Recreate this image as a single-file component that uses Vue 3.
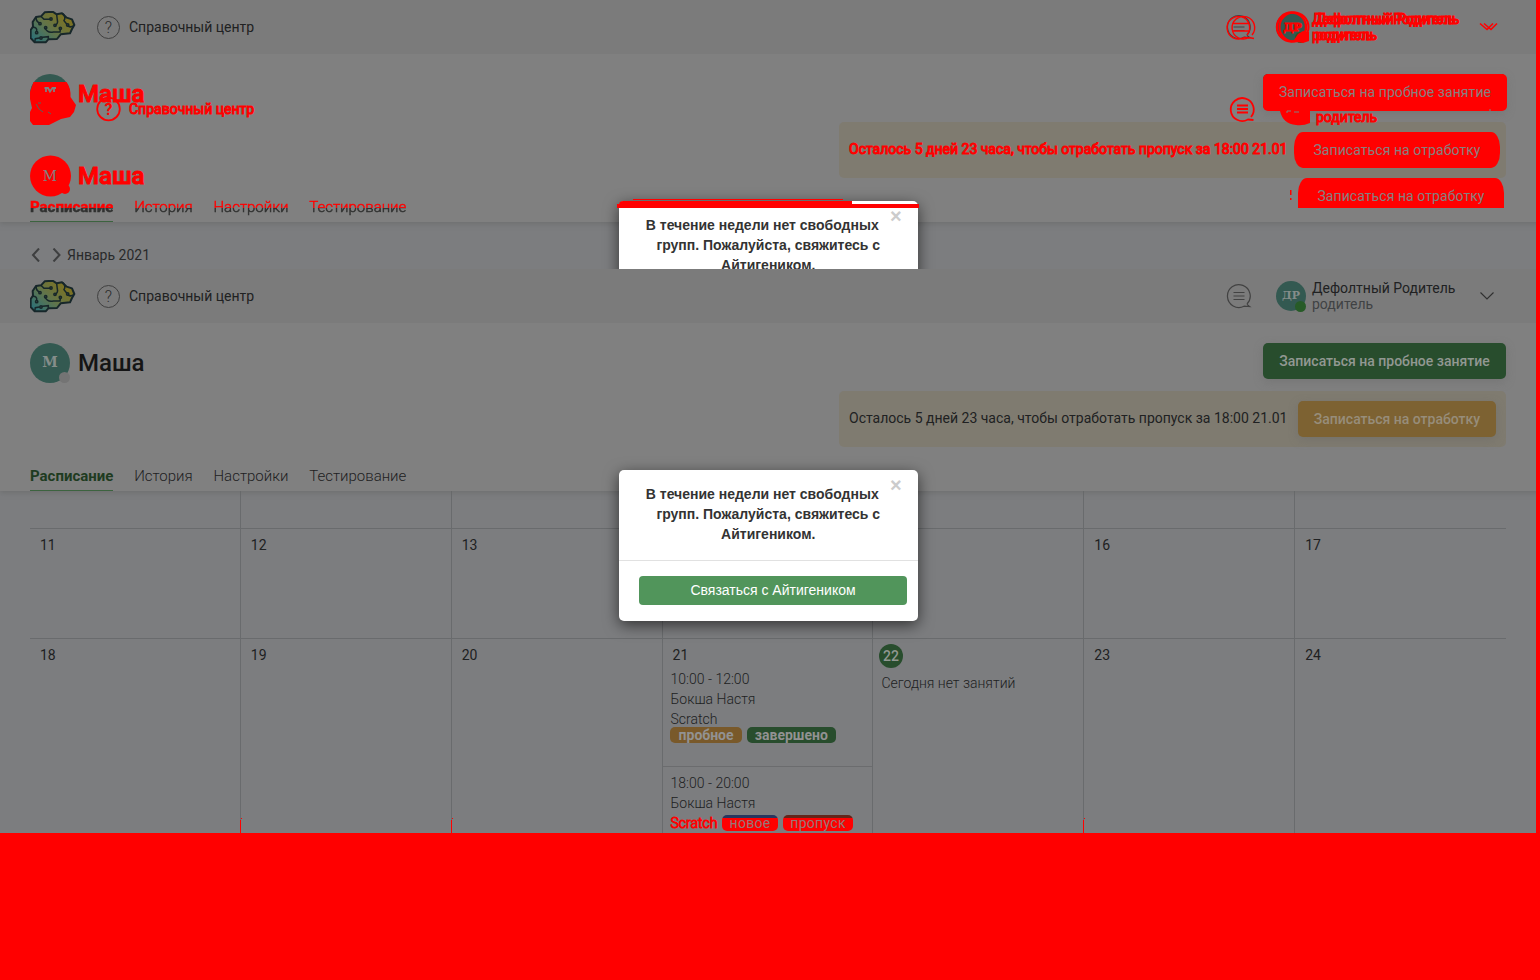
<script setup>
const tabs = [
  { name: 'Расписание', active: true },
  { name: 'История' },
  { name: 'Настройки' },
  { name: 'Тестирование' }
]
const weekA = [11, 12, 13, 14, 15, 16, 17]
const weekB = [18, 19, 20, 21, 22, 23, 24]
const frames = [{ id: 'first', diff: true }, { id: 'second', diff: false }]
const brainOutline = 'M99 80 L98 66 L108 51 L123 49 L134 37 L158 35 L170 43 L186 40 L200 53 L216 58 L223 75 L216 87 L210 100 L182 103 L171 117 L145 118 L137 127 L104 127 L92 114 L92 90 Z'
</script>

<template>
  <div class="screen">
    <section v-for="f in frames" :key="f.id" class="frame" :class="f.id">
      <header class="topbar">
        <svg class="brain" viewBox="90 33 138 99">
          <defs>
            <linearGradient :id="'g-' + f.id" x1="0" y1="1" x2="1" y2="0.2">
              <stop offset="0" stop-color="#237080" />
              <stop offset=".5" stop-color="#637448" />
              <stop offset="1" stop-color="#847116" />
            </linearGradient>
          </defs>
          <path :d="brainOutline" :fill="`url(#g-${f.id})`" stroke="#17272a" stroke-width="6" stroke-linejoin="round" />
          <g fill="none" stroke="#17272a" stroke-width="4.500" stroke-linecap="round">
            <path d="M108 52 Q108 64 116 68 M124 50 L132 58 L150 58 M170 44 L172 60 Q175 71 166 75 M135 84 Q142 100 160 96 L180 96 L181 88 M99 82 Q112 82 110 94 M145 118 L145 110 L128 112 M104 127 L106 116 L118 114 M222 76 Q214 84 204 78 M190 42 Q198 52 192 62 L200 72" />
            <circle cx="120" cy="71" r="3.500" /><circle cx="153" cy="57" r="3.500" /><circle cx="165" cy="76" r="3.500" />
            <circle cx="137" cy="83" r="3.500" /><circle cx="181" cy="85" r="3.500" /><circle cx="203" cy="75" r="3.500" />
            <circle cx="110" cy="98" r="3.500" /><circle cx="123" cy="114" r="3.500" />
          </g>
        </svg>
        <span class="help">?</span>
        <span class="help-label">Справочный центр</span>
        <div class="user">
          <svg class="chat" viewBox="0 0 26 26">
            <path d="M21 21 A11.4 11.4 0 1 0 18 23.2 L23.5 23.5 Q22 22.5 21 21 M7.500 9.500 H18.500 M7.500 13 H18.500 M7.500 16.500 H18.500" />
          </svg>
          <span class="avatar small"><b>ДР</b><i></i></span>
          <span class="who"><span>Дефолтный Родитель</span><span class="role">родитель</span></span>
          <svg class="chev" viewBox="0 0 14 8"><path d="M.5 .5 L7 7 L13.500 .5" /></svg>
        </div>
      </header>

      <div class="panel">
        <div class="student"><span class="avatar"><b>М</b><i></i></span><span class="name">Маша</span></div>
        <div class="actions">
          <button class="btn green"><span v-if="!f.diff">Записаться на пробное занятие</span></button>
          <div class="notice">
            <span v-if="!f.diff" class="notice-text">Осталось 5 дней 23 часа, чтобы отработать пропуск за 18:00 21.01</span>
            <button v-if="!f.diff" class="btn amber">Записаться на отработку</button>
          </div>
        </div>
        <nav><a v-for="t in tabs" :key="t.name" :class="{ active: t.active }">{{ t.name }}</a></nav>
      </div>

      <div v-if="f.diff" class="month">
        <svg viewBox="0 0 32 14"><path d="M9 .5 L3 7 L9 13.500 M23.500 .5 L29.500 7 L23.500 13.500" /></svg>
        <span>Январь 2021</span>
      </div>
      <div v-else class="calendar">
        <div class="week w0"><div v-for="n in 7" :key="n" class="day"></div></div>
        <div class="week w1"><div v-for="n in weekA" :key="n" class="day"><span class="num">{{ n }}</span></div></div>
        <div class="week w2">
          <div v-for="n in weekB" :key="n" class="day">
            <span class="num" :class="{ today: n === 22 }">{{ n }}</span>
            <template v-if="n === 21">
              <div class="lesson">
                <p>10:00 - 12:00</p><p>Бокша Настя</p><p>Scratch</p>
                <div class="pills"><em class="trial">пробное</em><em class="done">завершено</em></div>
              </div>
              <div class="lesson late">
                <p>18:00 - 20:00</p><p>Бокша Настя</p>
                <div class="pills"><p class="redtext">Scratch</p><em class="new">новое</em><em class="miss">пропуск</em></div>
              </div>
            </template>
            <p v-if="n === 22" class="empty">Сегодня нет занятий</p>
          </div>
        </div>
      </div>

      <div class="modal">
        <div class="modal-head">
          <span class="close">×</span>
          <span class="l1">В течение недели нет свободных</span>
          <span>групп. Пожалуйста, свяжитесь с</span>
          <span>Айтигеником.</span>
        </div>
        <div v-if="!f.diff" class="modal-foot"><button>Связаться с Айтигеником</button></div>
      </div>

      <!-- changed pixels, painted over the first frame -->
      <div v-if="f.diff" class="diff">
        <span class="r r-name n1">Маша</span>
        <span class="r r-name n2">Маша</span>
        <span class="r r-help">Справочный центр</span>
        <span class="r r-notice">Осталось 5 дней 23 часа, чтобы отработать пропуск за 18:00 21.01</span>
        <span class="r r-who p1">Дефолтный Родитель</span>
        <span class="r r-who p2">Дефолтный Родитель</span>
        <span class="r r-who p3">родитель</span>
        <span class="r r-who p4">родитель</span>
        <span class="r r-who p5">родитель</span>
        <span class="blk b-trial">Записаться на пробное занятие</span>
        <span class="blk b-a1">Записаться на отработку</span>
        <span class="blk b-a2">Записаться на отработку</span>
        <span class="bar m1"></span><span class="bar m2"></span><span class="bar m3"></span>
        <svg class="marks" width="1540" height="269" viewBox="0 0 1540 269">
          <g fill="#f00">
            <path d="M33.500 82 H66.500 Q71 88 70.500 97 L76 105 L74 112 L70 117 L61 119 L55 122 L49 125 H33 L30 121 V112 L32 108 L30 99 V92 Z" />
            <circle cx="50.500" cy="176" r="20.500" /><circle cx="65" cy="189" r="5" />
            <path d="M1280 111 H1310 V123 Q1303 126 1296 125 Q1283 124 1280 111 Z" />
            <path d="M1294 40 L1298 34 L1303 31 L1309 32 V41 L1303 43 L1297 42 Z" />
            <rect x="1290" y="190" width="1.500" height="5" /><rect x="1290" y="198" width="1.500" height="2" />
          </g>
          <g fill="none" stroke="#f00" stroke-width="1.800">
            <circle cx="108.500" cy="109" r="11.300" />
            <circle cx="1291.500" cy="27" r="14.500" stroke-width="2.400" /><circle cx="1294" cy="27" r="14.500" stroke-width="2" />
            <path stroke-width="1.400" d="M1247 35 A11.300 11.300 0 1 0 1244 37.500 L1249.500 38 M1252 35 A11.300 11.300 0 1 0 1249 37.500 L1254 38.500 M1233 23.500 H1249 M1233 31 H1249" />
            <path d="M1251 117 A11.500 11.500 0 1 0 1248 119.500 L1253.500 120 M1237 105.500 H1248 M1237 109 H1248 M1237 112.500 H1248" />
            <path stroke-width="1.600" d="M1480 23.500 L1487 29.500 L1493 23.500 M1484 23.500 L1491 29.500 L1497 23.500" />
          </g>
          <path d="M36 104 L39 109 L43 112 M38 103 H41 M48 112 L51 114" fill="none" stroke="#54665f" stroke-width="1" />
          <path d="M44.500 88 H48 L50 91.500 L52.500 88 H56 M46 88 V92 M54 88 V92" fill="none" stroke="#808080" stroke-width="1.800" />
          <path d="M1287 113 V111 H1291 M1294 112 H1299 M1490 111 V109" fill="none" stroke="#808080" stroke-width="1" />
          <text x="50" y="181" text-anchor="middle" class="m">М</text>
          <text x="108.500" y="114.500" text-anchor="middle" class="q">?</text>
          <text x="1292.500" y="31" text-anchor="middle" class="dr">ДР</text>
        </svg>
      </div>
    </section>
    <div class="rest"></div>
    <div class="edge"></div>
    <i class="tick k1"></i><i class="tick k2"></i><i class="tick k3"></i>
  </div>
</template>

<style>
body { margin: 0; overflow: hidden; }
</style>
<style scoped>
* { box-sizing: border-box; }
.screen { position: relative; width: 1540px; height: 980px; display: flex; flex-direction: column; overflow: hidden; background: #7c7d7f; font-family: Roboto, "Noto Sans", sans-serif; font-size: 14px; color: #202122; }
.frame { position: relative; overflow: hidden; flex: none; width: 1540px; background: #7c7d7f; }
.first { height: 269px; }
.second { height: 564px; }
.topbar { position: relative; z-index: 2; height: 54px; background: #7b7b7b; display: flex; align-items: center; padding-left: 30px; white-space: nowrap; }
.brain { width: 46px; height: 33px; }
.help { width: 23px; height: 23px; margin-left: 21px; border: 1px solid #404040; border-radius: 50%; text-align: center; font-size: 16px; font-weight: 300; line-height: 21px; color: #2d2d2d; }
.help-label { margin-left: 9px; }
.user { margin-left: auto; display: flex; align-items: center; width: 314px; height: 54px; }
.chat { width: 26px; height: 26px; margin-left: -.5px; fill: none; stroke: #424242; stroke-width: 1.2; }
.avatar { position: relative; width: 40px; height: 40px; border-radius: 50%; background: #335951; color: #858d8a; display: flex; align-items: center; justify-content: center; font: bold 14px "DejaVu Serif", serif; }
.avatar b { margin-top: -3px; }
.avatar i { position: absolute; width: 11px; height: 11px; right: 0; bottom: 0; border-radius: 50%; background: #747474; }
.avatar.small { width: 30px; height: 30px; margin-left: 24.500px; font-size: 11px; }
.avatar.small b { margin-top: -1px; }
.avatar.small i { background: #275b27; bottom: -1px; }
.first .small b { visibility: hidden; }
.who { margin-left: 6px; width: 168px; padding-bottom: 1px; display: flex; flex-direction: column; line-height: 16px; }
.role { color: #404244; }
.chev { width: 14px; height: 8px; fill: none; stroke: #303030; stroke-width: 1.1; }
.first .chev { stroke: transparent; }
.panel { position: relative; height: 168px; background: #808080; box-shadow: 0 2px 5px #66676899; padding: 20px 34px 0 30px; display: flex; justify-content: space-between; z-index: 1; }
.student { display: flex; height: 40px; gap: 8px; align-items: center; }
.name { font-size: 24px; font-weight: 500; color: #151515; }
.actions { display: flex; flex-direction: column; align-items: flex-end; gap: 12px; }
.btn { flex: none; height: 36px; border: 0; border-radius: 5px; font: 500 14px Roboto, sans-serif; color: #929892; padding: 0; white-space: nowrap; box-shadow: 0 3px 10px #66666660; }
.green { width: 243px; background: #284d2d; }
.amber { width: 198px; background: #7d6232; color: #978d7a; }
.notice { width: 667px; height: 56px; background: #7f7b70; border-radius: 5px; display: flex; align-items: center; justify-content: space-between; padding: 0 10px; white-space: nowrap; }
.notice-text { padding-bottom: 3px; }
nav { position: absolute; left: 30px; bottom: 0; height: 26px; display: flex; gap: 20.800px; font-size: 15px; font-weight: 300; line-height: 22px; }
nav a.active { font-weight: 700; color: #1e3b21; border-bottom: 1.5px solid #3c633f; }
.first nav a { color: transparent; background: linear-gradient(#f00 0 12px, #303130 12px); background-clip: text; -webkit-background-clip: text; -webkit-text-stroke: .5px transparent; }
.first .name { visibility: hidden; }
.month { height: 47px; padding: 19px 0 0 30px; display: flex; align-items: center; gap: 5px; color: #292a2b; }
.month svg { width: 32px; height: 14px; fill: none; stroke: #3e3f40; stroke-width: 2; }
.calendar { width: 1476px; margin-left: 30px; font-weight: 400; }
.week { display: grid; grid-template-columns: repeat(7, 1fr); border-bottom: 1px solid #696b6d; }
.w0 { height: 38px; } .w1 { height: 110px; } .w2 { height: 195px; border: 0; }
.day { border-right: 1px solid #696b6d; padding: 8px 0 0 10px; position: relative; min-width: 0; }
.day:last-child { border: 0; }
.num { display: block; line-height: 17px; }
.today { width: 24px; height: 24px; margin: -3px 0 0 -4.500px; background: #284d2d; color: #929892; border-radius: 50%; text-align: center; line-height: 24px; font-weight: 500; }
p { margin: 0; font-weight: 300; line-height: 20px; white-space: nowrap; }
.empty { margin: 5px 0 0 -2px; }
.lesson { height: 98px; margin: 5px 0 0 -10px; padding: 0 0 0 8px; border-bottom: 1px solid #6b6c6e; }
.late { margin-top: 0; padding-top: 6px; border: 0; }
.pills { display: flex; gap: 5px; height: 16px; margin-top: -2px; }
.lesson:not(.late) .pills { margin-left: -.5px; gap: 4.500px; }
.late .pills { margin: 2px 0 0 -1px; }
em { font-style: normal; font-weight: 700; font-size: 14px; height: 16px; line-height: 17px; border-radius: 5px; text-align: center; color: #929292; }
.trial { width: 72px; background: #79592a; } .done { width: 89.500px; background: #284d2d; }
.late em { font-weight: 400; letter-spacing: .3px; color: #957878; }
.new { width: 56px; background: linear-gradient(#29365f 0 3px, #f00 3px); } .miss { width: 70px; background: linear-gradient(#64251a 0 3px, #f00 3px); }
.redtext { width: 47px; line-height: 17px; text-indent: .5px; margin-left: .5px; color: #f00; -webkit-text-stroke: 1px #f00; }
.modal { position: absolute; z-index: 3; left: 619px; top: 201px; width: 298.5px; height: 151px; background: #fff; border-radius: 5px; box-shadow: 0 4px 15px #0009; font-family: "Liberation Sans", sans-serif; font-size: 14px; }
.modal-head { position: relative; height: 90.500px; padding-top: 14px; border-bottom: 1px solid #e1e1e1; font-weight: 700; color: #333; white-space: nowrap; }
.modal-head span:not(.close) { display: block; text-align: center; line-height: 20px; }
.modal-head .l1 { margin-left: -12px; }
.close { position: absolute; left: 271px; top: 4px; color: #ccc; font-size: 20px; line-height: 22px; }
.modal-foot button { display: block; margin: 15px 0 0 20px; width: 268px; height: 29px; border: 0; border-radius: 4px; background: #51955b; color: #fff; font: 14px "Liberation Sans", sans-serif; padding: 0 0 1px; }
.diff { position: absolute; inset: 0; z-index: 4; color: #f00; }
.diff > * { position: absolute; white-space: nowrap; }
.r { -webkit-text-stroke: 1px #f00; line-height: 18px; }
.r-name { left: 78px; font-size: 24px; font-weight: 500; line-height: 30px; }
.n1 { top: 79px; } .n2 { top: 161px; }
.r-help { left: 129px; top: 100px; }
.r-notice { left: 849px; top: 140px; }
.p1 { left: 1312px; top: 10px; } .p2 { left: 1316px; top: 10px; } .p3 { left: 1312px; top: 26px; } .p4 { left: 1316px; top: 26px; } .p5 { left: 1316px; top: 108px; }
.blk { background: #f00; color: #858080; font-weight: 400; text-align: center; letter-spacing: .07px; padding-top: 1px; }
.b-trial { left: 1263px; top: 74px; width: 244px; height: 37px; line-height: 35px; border-radius: 5px; }
.b-a1 { left: 1294px; top: 132px; width: 206px; height: 36px; line-height: 35px; border-radius: 9px / 15px; }
.b-a2 { left: 1298px; top: 178px; width: 206px; height: 30px; line-height: 35px; border-radius: 9px 9px 0 0 / 15px 15px 0 0; }
.bar { background: #f00; }
.m1 { left: 633px; top: 199px; width: 210px; height: 1px; } .m2 { left: 619px; top: 201px; width: 233px; height: 4px; border-radius: 4px 0 0 0; } .m3 { left: 617px; top: 204px; width: 302px; height: 4px; }
.marks { left: 0; top: 0; }
.marks text { font-family: "DejaVu Serif", serif; }
.marks .m { fill: #808080; font-size: 14px; }
.marks .q { fill: #f00; font: 700 16px Roboto, sans-serif; }
.marks .dr { fill: #f00; stroke: #f00; stroke-width: 1.2; font-weight: 700; font-size: 11px; }
.rest { flex: 1; background: #f00; }
.edge { position: absolute; right: 0; top: 0; bottom: 0; width: 4px; background: #f00; z-index: 9; }
.tick { position: absolute; top: 820px; width: 1px; height: 13px; background: #f00; }
.tick::before { content: ""; position: absolute; left: 1px; top: -2px; width: 1px; height: 1px; background: #f00; }
.k1 { left: 240px; } .k2 { left: 451px; } .k3 { left: 1083px; }
</style>
